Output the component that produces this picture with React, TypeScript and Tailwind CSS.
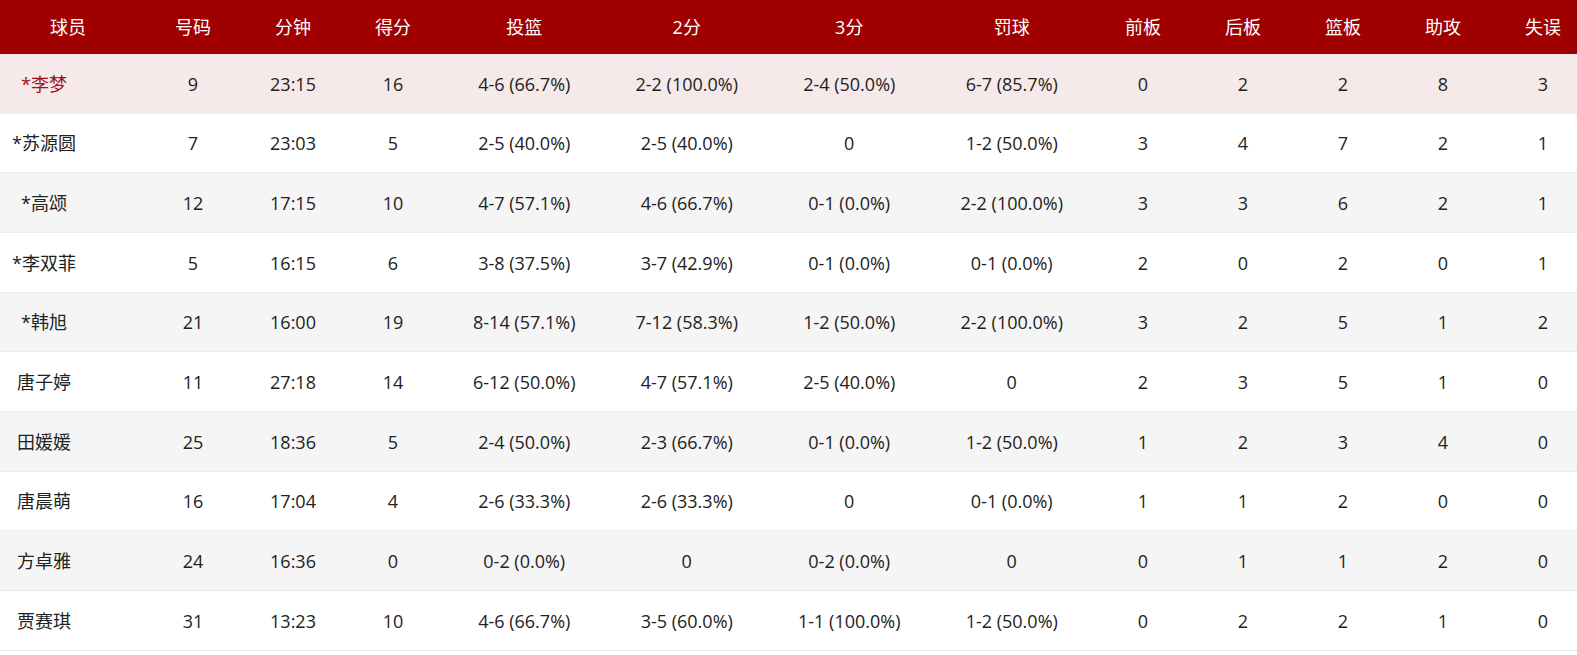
import React from "react";

type Row = {
    name: string;
    no: string;
    min: string;
    pts: string;
    fg: string;
    two: string;
    three: string;
    ft: string;
    oreb: string;
    dreb: string;
    reb: string;
    ast: string;
    tov: string;
};

const headers = ["号码", "分钟", "得分", "投篮", "2分", "3分", "罚球", "前板", "后板", "篮板", "助攻", "失误"];

const rows: Row[] = [
    { name: "*李梦", no: "9", min: "23:15", pts: "16", fg: "4-6 (66.7%)", two: "2-2 (100.0%)", three: "2-4 (50.0%)", ft: "6-7 (85.7%)", oreb: "0", dreb: "2", reb: "2", ast: "8", tov: "3" },
    { name: "*苏源圆", no: "7", min: "23:03", pts: "5", fg: "2-5 (40.0%)", two: "2-5 (40.0%)", three: "0", ft: "1-2 (50.0%)", oreb: "3", dreb: "4", reb: "7", ast: "2", tov: "1" },
    { name: "*高颂", no: "12", min: "17:15", pts: "10", fg: "4-7 (57.1%)", two: "4-6 (66.7%)", three: "0-1 (0.0%)", ft: "2-2 (100.0%)", oreb: "3", dreb: "3", reb: "6", ast: "2", tov: "1" },
    { name: "*李双菲", no: "5", min: "16:15", pts: "6", fg: "3-8 (37.5%)", two: "3-7 (42.9%)", three: "0-1 (0.0%)", ft: "0-1 (0.0%)", oreb: "2", dreb: "0", reb: "2", ast: "0", tov: "1" },
    { name: "*韩旭", no: "21", min: "16:00", pts: "19", fg: "8-14 (57.1%)", two: "7-12 (58.3%)", three: "1-2 (50.0%)", ft: "2-2 (100.0%)", oreb: "3", dreb: "2", reb: "5", ast: "1", tov: "2" },
    { name: "唐子婷", no: "11", min: "27:18", pts: "14", fg: "6-12 (50.0%)", two: "4-7 (57.1%)", three: "2-5 (40.0%)", ft: "0", oreb: "2", dreb: "3", reb: "5", ast: "1", tov: "0" },
    { name: "田媛媛", no: "25", min: "18:36", pts: "5", fg: "2-4 (50.0%)", two: "2-3 (66.7%)", three: "0-1 (0.0%)", ft: "1-2 (50.0%)", oreb: "1", dreb: "2", reb: "3", ast: "4", tov: "0" },
    { name: "唐晨萌", no: "16", min: "17:04", pts: "4", fg: "2-6 (33.3%)", two: "2-6 (33.3%)", three: "0", ft: "0-1 (0.0%)", oreb: "1", dreb: "1", reb: "2", ast: "0", tov: "0" },
    { name: "方卓雅", no: "24", min: "16:36", pts: "0", fg: "0-2 (0.0%)", two: "0", three: "0-2 (0.0%)", ft: "0", oreb: "0", dreb: "1", reb: "1", ast: "2", tov: "0" },
    { name: "贾赛琪", no: "31", min: "13:23", pts: "10", fg: "4-6 (66.7%)", two: "3-5 (60.0%)", three: "1-1 (100.0%)", ft: "1-2 (50.0%)", oreb: "0", dreb: "2", reb: "2", ast: "1", tov: "0" },
];

// column template: name, 3 short, 4 shooting, 5 short
const grid = "grid grid-cols-[143px_100px_100px_100px_162.5px_162.5px_162.5px_162.5px_100px_100px_100px_100px_100px]";

const App = () => {
    return (
        <div className="w-full h-[655px] overflow-hidden bg-white font-['Segoe_UI','Open_Sans','Noto_Sans_CJK_SC',sans-serif] text-[18px] text-[#222]">
            <div className="w-[1593px]">
                <div className={`${grid} h-[54px] items-center bg-[#a10000] text-white`}>
                    <div className="pr-[7px] text-center">球员</div>
                    {headers.map((h) => (
                        <div key={h} className="text-center">
                            {h}
                        </div>
                    ))}
                </div>

                {rows.map((r, i) => {
                    const bg = i === 0 ? "bg-[#f6e9e9]" : i % 2 === 0 ? "bg-[#f5f5f5]" : "bg-white";
                    const cells = [r.no, r.min, r.pts, r.fg, r.two, r.three, r.ft, r.oreb, r.dreb, r.reb, r.ast, r.tov];
                    return (
                        <div key={r.name} className={`${grid} h-[59.67px] pt-[2px] items-center border-b border-[#ececec] ${bg}`}>
                            <div className={`w-[88px] text-center ${i === 0 ? "text-[#a0101a]" : ""}`}>{r.name}</div>
                            {cells.map((c, j) => (
                                <div key={j} className="text-center">
                                    {c}
                                </div>
                            ))}
                        </div>
                    );
                })}
            </div>
        </div>
    );
};

export default App;
